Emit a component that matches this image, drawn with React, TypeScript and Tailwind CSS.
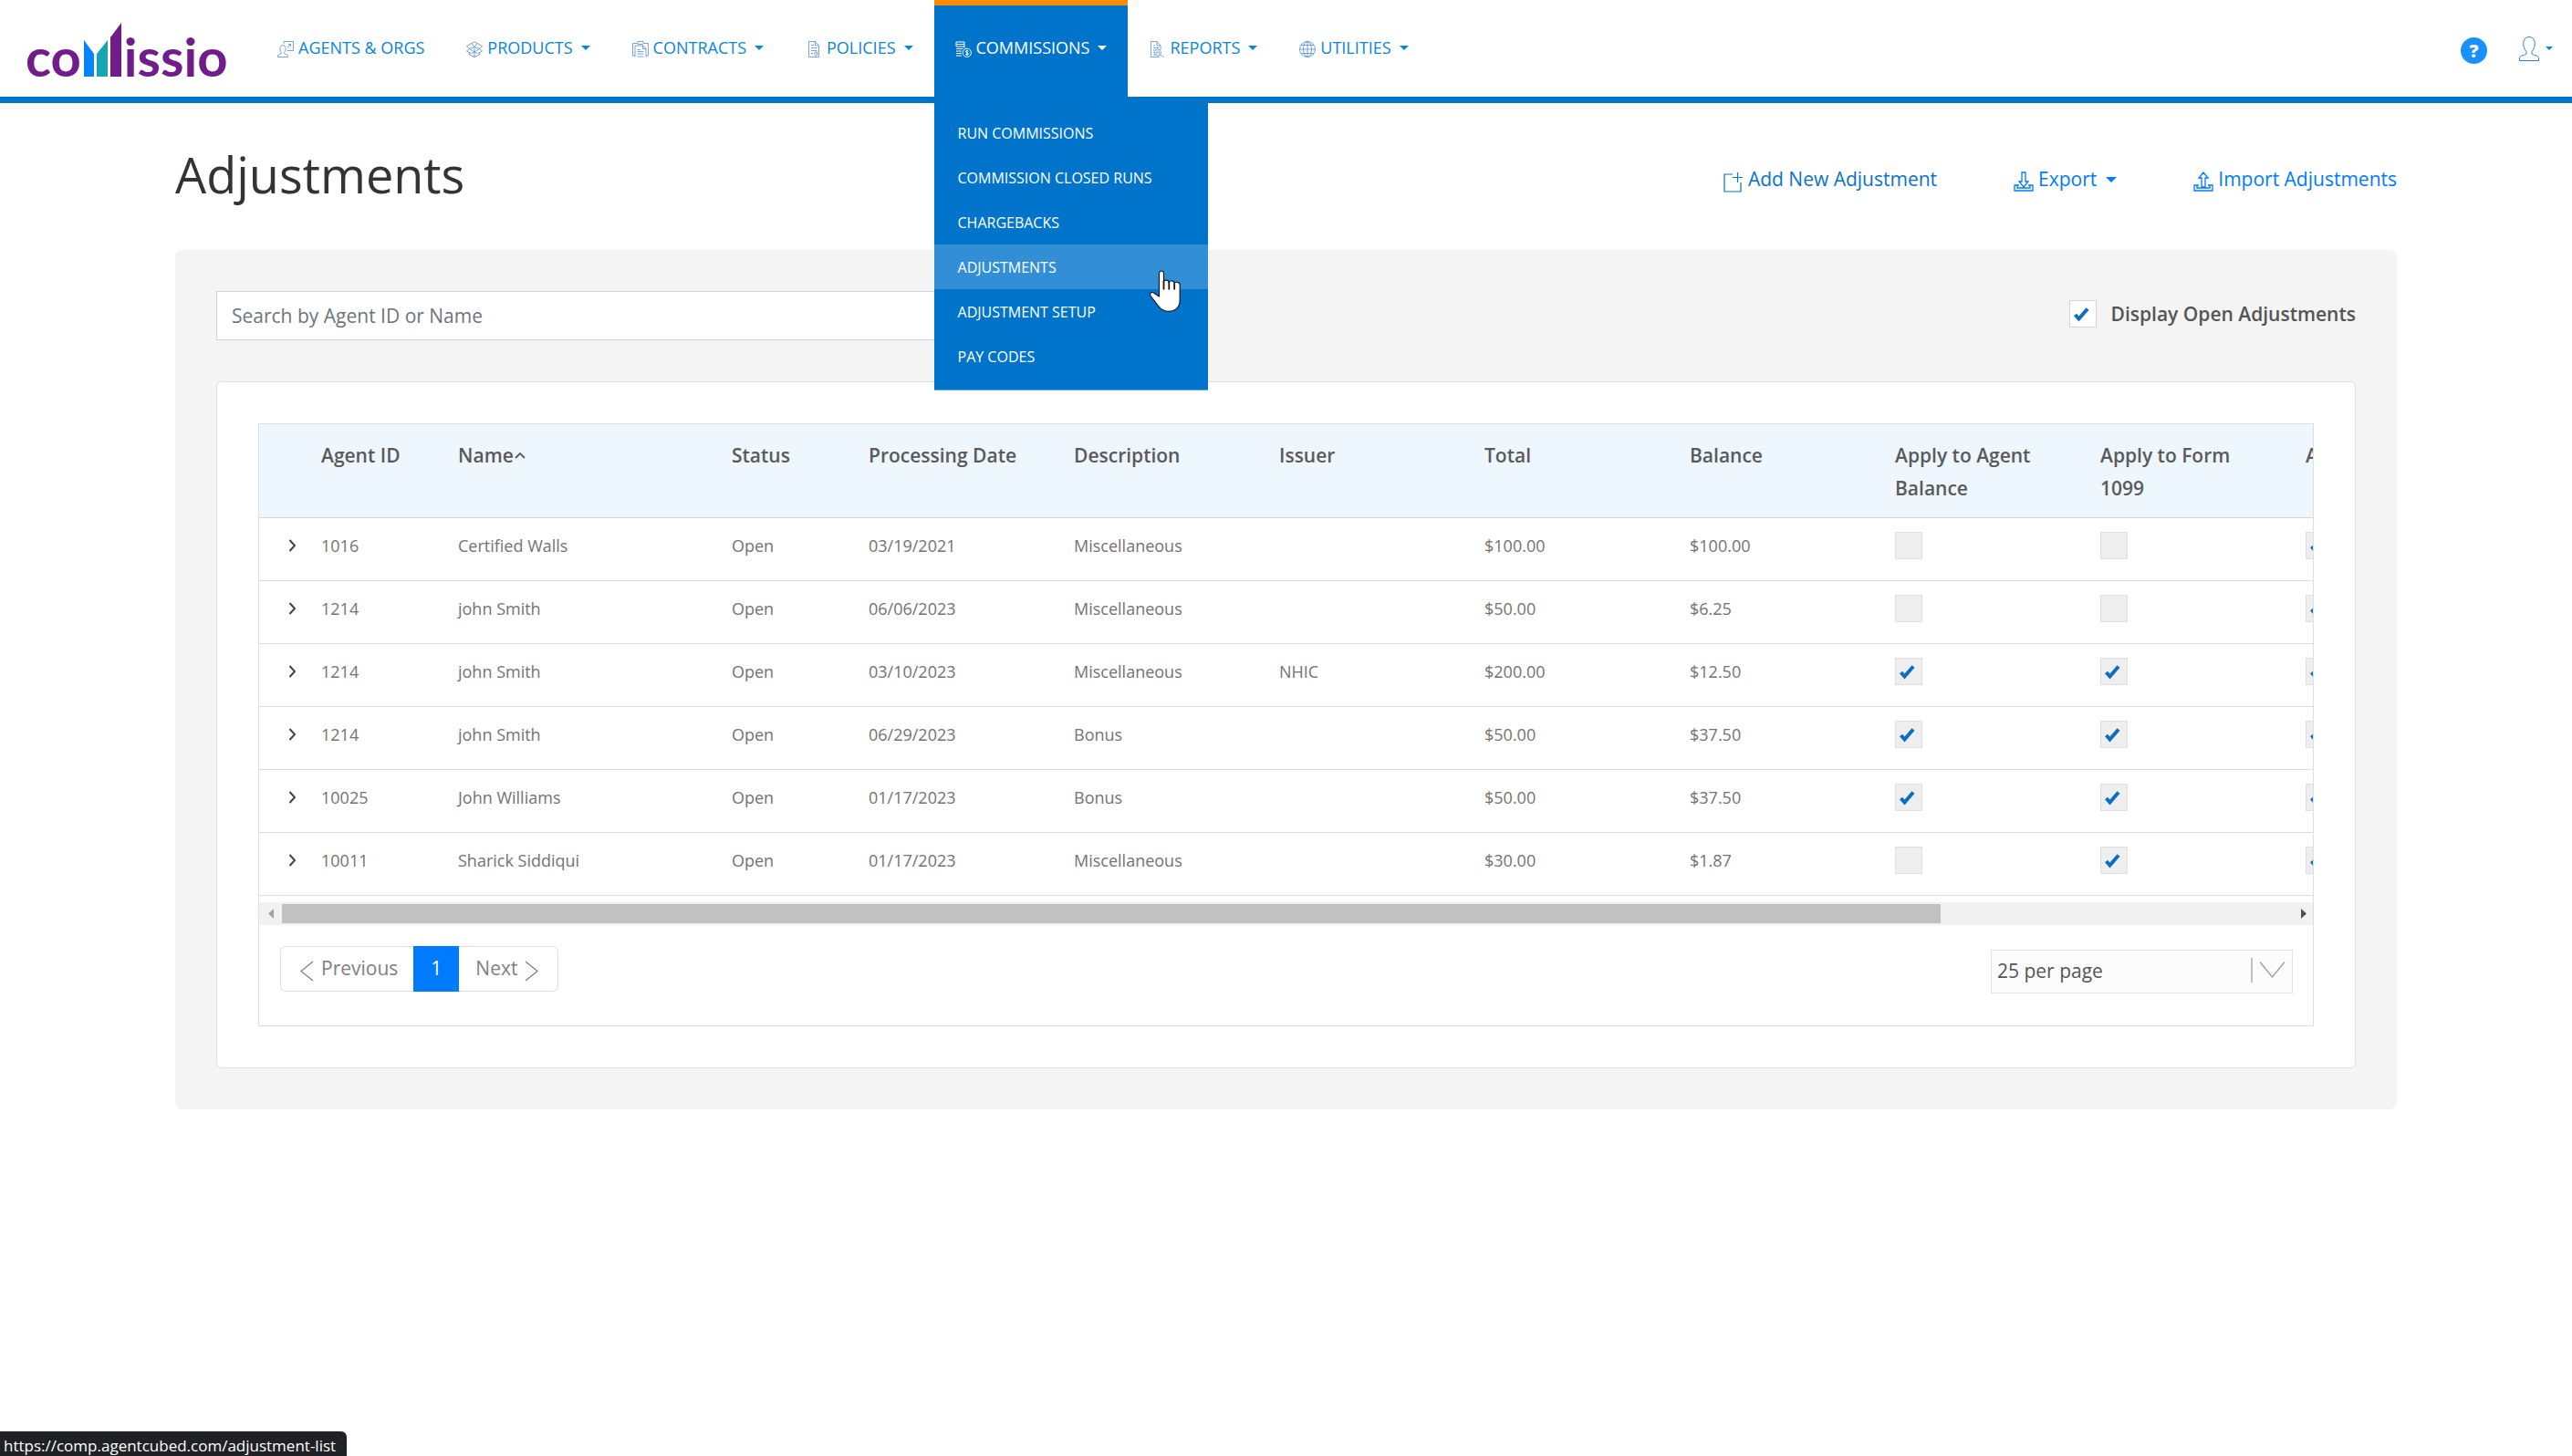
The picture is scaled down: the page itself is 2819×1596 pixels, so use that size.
import { useState, type ReactNode } from "react";

type Adjustment = {
  agentId: string;
  name: string;
  date: string;
  description: string;
  issuer?: string;
  total: string;
  balance: string;
  agentBalance: boolean;
  form1099: boolean;
};

const adjustments: Adjustment[] = [
  { agentId: "1016", name: "Certified Walls", date: "03/19/2021", description: "Miscellaneous", total: "$100.00", balance: "$100.00", agentBalance: false, form1099: false },
  { agentId: "1214", name: "john Smith", date: "06/06/2023", description: "Miscellaneous", total: "$50.00", balance: "$6.25", agentBalance: false, form1099: false },
  { agentId: "1214", name: "john Smith", date: "03/10/2023", description: "Miscellaneous", issuer: "NHIC", total: "$200.00", balance: "$12.50", agentBalance: true, form1099: true },
  { agentId: "1214", name: "john Smith", date: "06/29/2023", description: "Bonus", total: "$50.00", balance: "$37.50", agentBalance: true, form1099: true },
  { agentId: "10025", name: "John Williams", date: "01/17/2023", description: "Bonus", total: "$50.00", balance: "$37.50", agentBalance: true, form1099: true },
  { agentId: "10011", name: "Sharick Siddiqui", date: "01/17/2023", description: "Miscellaneous", total: "$30.00", balance: "$1.87", agentBalance: false, form1099: true },
];

const menuItems = [
  "RUN COMMISSIONS",
  "COMMISSION CLOSED RUNS",
  "CHARGEBACKS",
  "ADJUSTMENTS",
  "ADJUSTMENT SETUP",
  "PAY CODES",
];

const Icon = ({ children }: { children: ReactNode }) => (
  <svg
    viewBox="0 0 18 18"
    className="w-[18px] h-[18px] mt-1 shrink-0"
    fill="none"
    stroke="currentColor"
    strokeWidth="0.7"
  >
    {children}
  </svg>
);

const AgentsIcon = () => (
  <Icon>
    <path d="M7 3V.5h10.500v10H11" />
    <path d="M11 7l3.500-3.500M12 3.500h2.500V6" />
    <path d="M4.500 12.500C2 10 2.500 4.500 6 4.500s4 5.500 1.500 8v1c0 .8 4 .8 4 2.500v1.500H.5V16c0-1.700 4-1.700 4-2.500z" />
  </Icon>
);

const ProductsIcon = () => (
  <Icon>
    <path d="M9 6.500L5.500 2.500.5 5.500l3 3zM9 6.500l3.500-4 5 3-3 3zM9 12L3.500 8.500.5 11l5 2.500zM9 12l5.500-3.500 3 2.500-5 2.500z" />
    <path d="M3.500 12.500V15L9 17.500l5.500-2.500v-2.500M9 6.500v11M5.500 2.500L9 1l3.500 1.500" />
  </Icon>
);

const ContractsIcon = () => (
  <Icon>
    <path d="M3 16H.5V2.500H6V.5h6v2h5.500V16H15" />
    <path d="M3 17.500V5h9l3 3v9.500M6 3.500h6M11.500 5v3.500H15M5.500 9.500h3.500M5.500 11.500h7M5.500 14h7M5.500 17h7" />
  </Icon>
);

const PoliciesIcon = () => (
  <Icon>
    <path d="M3.500.5h7l4 4.500v12.500h-11zM10.500 .5V5h4" />
    <path d="M6 4.500h3M6 7.500h6.500M6 10.500h6.500M6 13.500h2" />
    <path d="M10 12h2.500v3.500l-1.200.7-1.300-.7z" />
  </Icon>
);

const CommissionsIcon = () => (
  <Icon>
    <g strokeWidth="1">
      <path d="M1 1h9v2.500H1zM1 6h9M1 8.500h7.500M1 11h6M1 13.500h6M1 16h6M1 3.500V6M10 3.500v4" />
      <circle cx="12.800" cy="12.800" r="4.600" />
      <path d="M14.500 11.200c-.8-1-3.200-1-3.200.3 0 1.500 3.200.9 3.200 2.500 0 1.400-2.600 1.400-3.400.2M12.800 9.600v6.400" />
    </g>
  </Icon>
);

const ReportsIcon = () => (
  <Icon>
    <path d="M12 17.500H2.500V.5H9l4 4.500v4M9 .5V5h4M5 5h2M5 7.500h6M5 10h2M5 12.500h1M5 15h2" />
    <circle cx="10" cy="12.500" r="3.500" />
    <path d="M12.500 15l4 2.500M8.500 13.500v-1.500M10 13.500v-3M11.500 13.500v-2" />
  </Icon>
);

const GlobeIcon = () => (
  <Icon>
    <circle cx="9" cy="9" r="8.500" />
    <ellipse cx="9" cy="9" rx="4.500" ry="8.500" />
    <path d="M9 .5v17M.5 9h17M2 4.500h14M2 13.500h14" />
  </Icon>
);

const Caret = ({ className = "w-[10px] h-[5px]" }: { className?: string }) => (
  <svg viewBox="0 0 10 5" preserveAspectRatio="none" className={className} fill="currentColor">
    <path d="M0 0h10L5 5z" />
  </svg>
);

const NavItem = ({
  icon,
  label,
  menu = true,
}: {
  icon: ReactNode;
  label: string;
  menu?: boolean;
}) => (
  <a
    href="#"
    className="flex items-center h-[106px] px-[23px] pb-[2px] text-lg text-[#0a86d8]"
  >
    <span className="text-[#3f7fc9]">{icon}</span>
    <span className="ml-[5px]">{label}</span>
    {menu && <Caret className="w-[10px] h-[5px] ml-[9px]" />}
  </a>
);

const Logo = () => (
  <a
    href="#"
    aria-label="comissio"
    className="flex items-baseline w-[281px] h-[106px] pl-7 pt-[25px] font-['Lato',sans-serif] font-bold text-[58px] leading-[72px] text-[#701c8b]"
  >
    co
    <svg viewBox="0 0 41 59" className="w-[41px] h-[59px] ml-[3px] mr-[3px]">
      <path d="M0 19l11 15v25H0z" fill="#0583fb" />
      <path d="M14 34l12-15v40H14z" fill="#1aa5b4" />
      <path d="M29 16L41 0v59H29z" fill="#701c8b" />
    </svg>
    issio
  </a>
);

const CheckBox = ({
  label,
  defaultChecked,
  disabled = false,
  id,
}: {
  label?: string;
  defaultChecked: boolean;
  disabled?: boolean;
  id?: string;
}) => (
  <span className="grid size-[30px] shrink-0">
    <input
      id={id}
      type="checkbox"
      aria-label={label}
      defaultChecked={defaultChecked}
      disabled={disabled}
      className="peer col-start-1 row-start-1 size-[30px] appearance-none border border-[#ced4da] bg-white disabled:border-[#e0e0e0] disabled:bg-[#eeeeee]"
    />
    <svg
      viewBox="0 0 30 30"
      className="col-start-1 row-start-1 size-[30px] pointer-events-none hidden peer-checked:block"
      fill="none"
      stroke="#0a6fc2"
      strokeWidth="4"
    >
      <path d="M6.500 16l4 4.500L20 9.500" />
    </svg>
  </span>
);

const Th = ({ children }: { children?: ReactNode }) => (
  <th className="h-[103px] border-b border-[#d0d7de] bg-[#eef6fe] pl-2 pr-7 pt-4 align-top text-left text-[21px] font-semibold leading-9 text-[#5a5a5a]">
    {children}
  </th>
);

const Td = ({ children }: { children?: ReactNode }) => (
  <td className="h-[69px] border-b border-[#dddddd] px-2 pt-[15px] align-top text-lg leading-[30px] text-[#737373]">
    {children}
  </td>
);

const HandCursor = () => (
  <svg
    viewBox="0 0 34 46"
    className="absolute right-[30px] top-[190px] w-[34px] h-[46px] pointer-events-none"
    fill="white"
    stroke="#111827"
    strokeWidth="1.200"
    strokeLinejoin="round"
  >
    <path d="M10.500 29V3.500a2.500 2.500 0 0 1 5 0V13c0-2.600 5.500-2.600 5.700.5 1-2.800 6-2 6 1 1.200-2.200 6-1.300 6 1.500v17c0 8-5 12.300-12.200 12.300-5 0-8.500-2-11.500-6L1.200 28.500c-2-3 1-5 3.700-3.300z" />
    <path d="M15.500 12v9.500M21.300 13v8.500M27.200 14.500v7" fill="none" strokeWidth="1.800" />
  </svg>
);

const Header = () => (
  <header className="flex border-b-[7px] border-[#0073cb] bg-white">
    <Logo />
    <nav className="flex flex-1">
      <NavItem icon={<AgentsIcon />} label="AGENTS & ORGS" menu={false} />
      <NavItem icon={<ProductsIcon />} label="PRODUCTS" />
      <NavItem icon={<ContractsIcon />} label="CONTRACTS" />
      <NavItem icon={<PoliciesIcon />} label="POLICIES" />
      <div className="relative">
        <a
          href="#"
          className="flex items-center h-[106px] border-t-[6px] border-[#fb8c00] bg-[#0073cb] px-[23px] pb-2 text-lg text-white"
        >
          <CommissionsIcon />
          <span className="ml-[5px]">COMMISSIONS</span>
          <Caret className="w-[10px] h-[5px] ml-[9px]" />
        </a>
        <div className="absolute left-0 top-[106px] z-10 w-[300px] border-b border-[#5aa9e6] bg-[#0073cb] pt-[15px] pb-3">
          {menuItems.map((item) => (
            <a
              key={item}
              href="#"
              className={
                item === "ADJUSTMENTS"
                  ? "flex items-center h-[49px] px-[26px] text-base text-white bg-[#338fd5]"
                  : "flex items-center h-[49px] px-[26px] text-base text-white"
              }
            >
              {item}
            </a>
          ))}
          <HandCursor />
        </div>
      </div>
      <NavItem icon={<ReportsIcon />} label="REPORTS" />
      <NavItem icon={<GlobeIcon />} label="UTILITIES" />
    </nav>
    <div className="flex items-center pr-[21px] text-[#0a86d8]">
      <button
        aria-label="Help"
        className="mt-1 mr-[35px] size-[29px] rounded-full bg-[#1890ff] text-xl font-extrabold leading-[29px] text-white"
      >
        ?
      </button>
      <button aria-label="Account" className="flex items-center gap-[7px]">
        <svg viewBox="0 0 22 27" className="w-[22px] h-[27px]" fill="none" stroke="#2f80c8">
          <path d="M8 16.500C3 11 3.500.5 11 .5S19 11 14 16.500v2.500c0 1.300 7.500 1.300 7.500 4.500v3H.5v-3C.5 20.300 8 20.300 8 19z" />
        </svg>
        <Caret className="w-[8px] h-[4px]" />
      </button>
    </div>
  </header>
);

const Toolbar = () => (
  <div className="flex items-center pt-3 text-[21px]">
    <a href="#" className="flex items-center text-[#0a73c8]">
      <svg viewBox="0 0 21 23" className="w-[21px] h-[23px] mt-1 mr-[6px]" fill="none" stroke="currentColor" strokeWidth="1.200">
        <path d="M10 3H1v19h18V12M15.500 1v11M10 6.500h11" />
      </svg>
      Add New Adjustment
    </a>
    <button className="flex items-center ml-[84px] text-[#007bff]">
      <svg viewBox="0 0 22 22" className="w-[22px] h-[22px] mt-1 mr-[5px]" fill="none" stroke="currentColor" strokeWidth="1.300">
        <path d="M9 1h4v10h3l-5 6-5-6h3zM6 15H1v6h20v-6h-5M4 15v3h14v-3" />
      </svg>
      Export
      <Caret className="w-[12px] h-[6px] ml-[10px]" />
    </button>
    <a href="#" className="flex items-center ml-[84px] text-[#007bff]">
      <svg viewBox="0 0 22 22" className="w-[22px] h-[22px] mt-1 mr-[5px]" fill="none" stroke="currentColor" strokeWidth="1.300">
        <path d="M9 17V7H6l5-6 5 6h-3v10zM6 15H1v6h20v-6h-5M4 15v3h14v-3" />
      </svg>
      Import Adjustments
    </a>
  </div>
);

const AdjustmentTable = () => (
  <div className="overflow-hidden">
    <table className="w-[2725px] table-fixed border-separate border-spacing-0">
      <colgroup>
        <col className="w-[60px]" />
        <col className="w-[150px]" />
        <col className="w-[300px]" />
        <col className="w-[150px]" />
        <col className="w-[225px]" />
        <col className="w-[225px]" />
        <col className="w-[225px]" />
        <col className="w-[225px]" />
        <col className="w-[225px]" />
        <col className="w-[225px]" />
        <col className="w-[225px]" />
        <col />
      </colgroup>
      <thead>
        <tr>
          <Th />
          <Th>Agent ID</Th>
          <Th>
            <span className="flex items-center">
              Name
              <svg viewBox="0 0 12 8" className="w-[12px] h-[8px] ml-px" fill="none" stroke="currentColor" strokeWidth="1.800">
                <path d="M1 7l5-5 5 5" />
              </svg>
            </span>
          </Th>
          <Th>Status</Th>
          <Th>Processing Date</Th>
          <Th>Description</Th>
          <Th>Issuer</Th>
          <Th>Total</Th>
          <Th>Balance</Th>
          <Th>Apply to Agent Balance</Th>
          <Th>Apply to Form 1099</Th>
          <Th>A</Th>
        </tr>
      </thead>
      <tbody>
        {adjustments.map((row, i) => (
          <tr key={i}>
            <Td>
              <button aria-label="Expand row" className="flex items-center h-[30px] pl-6">
                <svg viewBox="0 0 9 14" className="w-[9px] h-[14px]" fill="none" stroke="#444444" strokeWidth="2">
                  <path d="M1.500 1l5.500 6-5.500 6" />
                </svg>
              </button>
            </Td>
            <Td>{row.agentId}</Td>
            <Td>{row.name}</Td>
            <Td>Open</Td>
            <Td>{row.date}</Td>
            <Td>{row.description}</Td>
            <Td>{row.issuer}</Td>
            <Td>{row.total}</Td>
            <Td>{row.balance}</Td>
            <Td>
              <CheckBox label="Apply to Agent Balance" defaultChecked={row.agentBalance} disabled />
            </Td>
            <Td>
              <CheckBox label="Apply to Form 1099" defaultChecked={row.form1099} disabled />
            </Td>
            <Td>
              <CheckBox label="Apply" defaultChecked disabled />
            </Td>
          </tr>
        ))}
      </tbody>
    </table>
  </div>
);

const ScrollBar = () => (
  <div className="flex items-center h-[25px] mt-[7px] bg-[#f1f1f1]">
    <div className="flex justify-center w-[25px]">
      <svg viewBox="0 0 6 11" className="w-[6px] h-[11px]" fill="#a3a3a3">
        <path d="M6 0v11L0 5.500z" />
      </svg>
    </div>
    <div className="flex-1">
      <div className="w-[82.6%] h-[21px] bg-[#c1c1c1]" />
    </div>
    <div className="flex justify-center w-[25px]">
      <svg viewBox="0 0 6 11" className="w-[6px] h-[11px] ml-1" fill="#505050">
        <path d="M0 0v11l6-5.500z" />
      </svg>
    </div>
  </div>
);

const Pagination = () => (
  <div className="flex items-start justify-between pl-[23px] pr-[22px] pt-[23px] pb-[35px] text-[21px]">
    <div className="flex h-[50px] text-[#808080]">
      <button className="flex items-center rounded-l-md border border-r-0 border-[#dee2e6] pl-[21px] pr-[17px]">
        <svg viewBox="0 0 15 23" className="w-[15px] h-[23px] mt-1 mr-[8px]" fill="none" stroke="currentColor" strokeWidth="1.300">
          <path d="M14 1L1 11.500 14 22" />
        </svg>
        Previous
      </button>
      <button className="w-[50px] bg-[#007bff] text-white">1</button>
      <button className="flex items-center rounded-r-md border border-l-0 border-[#dee2e6] pl-[18px] pr-[21px]">
        Next
        <svg viewBox="0 0 15 23" className="w-[15px] h-[23px] mt-1 ml-[8px]" fill="none" stroke="currentColor" strokeWidth="1.300">
          <path d="M1 1l13 10.500L1 22" />
        </svg>
      </button>
    </div>
    <div className="relative mt-1">
      <select
        aria-label="Rows per page"
        className="appearance-none w-[331px] h-[48px] border border-[#e3e3e3] bg-[#fcfcfc] pl-[6px] text-[#555555]"
      >
        <option>25 per page</option>
      </select>
      <svg
        viewBox="0 0 38 27"
        className="absolute right-[8px] top-[9px] w-[38px] h-[27px] pointer-events-none"
        fill="none"
        stroke="#999999"
        strokeWidth="1.200"
      >
        <path d="M1 0v27M10 4.500L23.500 21 37 4.500" />
      </svg>
    </div>
  </div>
);

const App = () => {
  const [search, setSearch] = useState("");
  return (
    <div className="min-h-screen bg-white font-['Open_Sans',sans-serif]">
      <Header />
      <main className="px-48 pt-[42px]">
        <div className="flex items-center justify-between mb-[47px]">
          <h1 className="text-[54px] leading-[72px] text-[#333333]">Adjustments</h1>
          <Toolbar />
        </div>
        <section className="rounded-lg bg-[#f4f4f4] p-[45px]">
          <div className="flex items-start justify-between mb-[45px]">
            <input
              type="text"
              aria-label="Search"
              placeholder="Search by Agent ID or Name"
              value={search}
              onChange={(e) => setSearch(e.target.value)}
              className="w-[45%] h-[54px] border border-[#ced4da] bg-white px-4 text-[21px] text-[#495057] placeholder:text-[#6c757d]"
            />
            <div className="flex items-center gap-4 pt-[10px]">
              <CheckBox id="open-adjustments" defaultChecked />
              <label htmlFor="open-adjustments" className="text-[21px] leading-[30px] font-semibold text-[#555555]">
                Display Open Adjustments
              </label>
            </div>
          </div>
          <div className="rounded-md border border-[#dedede] bg-white p-[45px]">
            <div className="border border-[#dedede]">
              <AdjustmentTable />
              <ScrollBar />
              <Pagination />
            </div>
          </div>
        </section>
      </main>
      <div className="fixed left-0 bottom-0 h-[27px] rounded-tr-md bg-[#202124] pl-1 pr-3 text-[17px] leading-8 text-white">
        https://comp.agentcubed.com/adjustment-list
      </div>
    </div>
  );
};

export default App;
